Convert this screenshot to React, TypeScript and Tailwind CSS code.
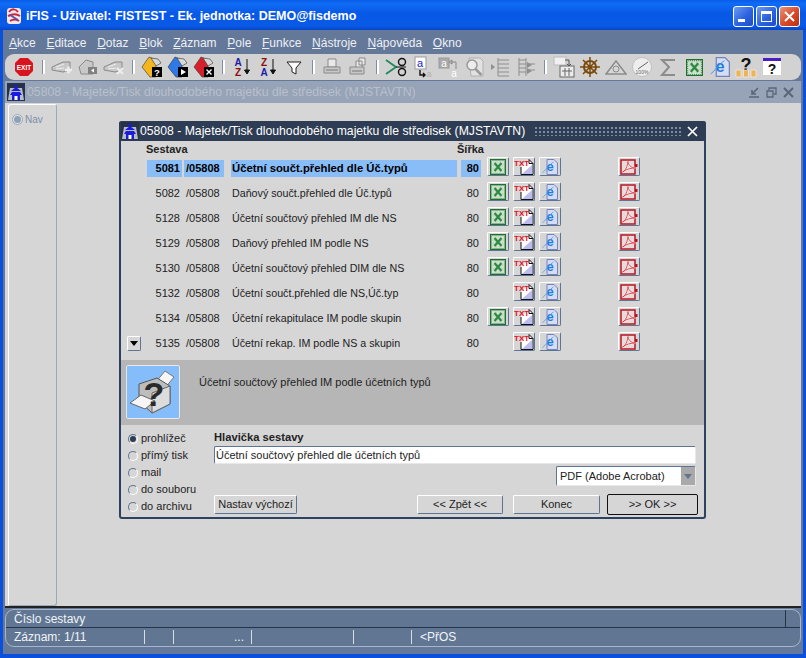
import type { ReactNode } from 'react'

const rows = [
  { id: '5081', name: 'Účetní součt.přehled dle Úč.typů', xls: true, active: true },
  { id: '5082', name: 'Daňový součt.přehled dle Úč.typů', xls: true },
  { id: '5128', name: 'Účetní součtový přehled IM dle NS', xls: true },
  { id: '5129', name: 'Daňový přehled IM podle NS', xls: true },
  { id: '5130', name: 'Účetní součtový přehled DIM dle NS', xls: true },
  { id: '5132', name: 'Účetní součt.přehled dle NS,Úč.typ', xls: false },
  { id: '5134', name: 'Účetní rekapitulace IM podle skupin', xls: true },
  { id: '5135', name: 'Účetní rekap. IM podle NS a skupin', xls: false },
]

const menu = ['Akce', 'Editace', 'Dotaz', 'Blok', 'Záznam', 'Pole', 'Funkce', 'Nástroje', 'Nápověda', 'Okno']
const radios = ['prohlížeč', 'přímý tisk', 'mail', 'do souboru', 'do archivu']

function Svg({ children, size = 22 }: { children: ReactNode; size?: number }) {
  return (
    <svg width={size} height={size} viewBox="0 0 22 22" className="block shrink-0">
      {children}
    </svg>
  )
}

function ExcelIcon({ size = 16 }: { size?: number }) {
  return (
    <svg width={size} height={size} viewBox="0 0 16 16" className="block">
      <rect x="0.5" y="0.5" width="15" height="15" fill="#cfe0cf" stroke="#1f6f30" />
      <rect x="1.5" y="1.5" width="13" height="13" fill="none" stroke="#3d8a4c" strokeDasharray="1 1" />
      <path d="M2.500 6h11M2.500 10h11M6 2.500v11M10 2.500v11" stroke="#9cc4a2" strokeWidth="0.6" />
      <path d="M4.500 4l7 8M11.500 4l-7 8" stroke="#2b8a40" strokeWidth="2" />
    </svg>
  )
}

function TxtIcon() {
  return (
    <svg width="20" height="16" viewBox="0 0 20 16" className="block">
      <path d="M15 0.500l4 4v11H7V8" fill="#fff" stroke="#111" />
      <path d="M8 15l10-9v9z" fill="#bcbcf0" />
      <path d="M15 0.500v4h4" fill="none" stroke="#111" />
      <text x="0" y="7" fontSize="8" fontWeight="700" fill="#e8101c" fontFamily="Liberation Sans, sans-serif">TXT</text>
    </svg>
  )
}

function IeIcon({ size = 16 }: { size?: number }) {
  return (
    <svg width={size} height={size} viewBox="0 0 16 16" className="block">
      <path d="M5 0.500h7l3.500 3.500v11.500H5z" fill="#d6dcf4" stroke="#7284bc" />
      <text x="8" y="12" textAnchor="middle" fontSize="13" fontWeight="700" fill="#1f7ede" fontFamily="Liberation Sans, sans-serif">e</text>
      <path d="M0.500 13.500c2-1 8-9 11-10.500" fill="none" stroke="#3a9cec" strokeWidth="0.8" />
    </svg>
  )
}

function PdfIcon() {
  return (
    <svg width="18" height="16" viewBox="0 0 18 16" className="block">
      <rect x="1" y="1" width="14" height="14" fill="#e6dcdc" stroke="#b81420" strokeWidth="1.500" />
      <rect x="15" y="5" width="2.500" height="3" fill="#b81420" />
      <path d="M2.500 13c3-1 5-6 5.500-10.500 0 3 3 6.500 7.500 6.500-4.500 0-9 1-13 4z" fill="none" stroke="#f0f0f0" strokeWidth="2" />
      <path d="M2.500 13c3-1 5-6 5.500-10.500 0 3 3 6.500 7.500 6.500-4.500 0-9 1-13 4z" fill="none" stroke="#e2202c" strokeWidth="0.8" />
    </svg>
  )
}

function Bevel({ children, className }: { children: ReactNode; className: string }) {
  return (
    <div className={`flex items-center justify-center rounded-[2px] border border-t-white border-l-white border-r-[#5d7593] border-b-[#5d7593] bg-[#d6d6d6] ${className}`}>
      {children}
    </div>
  )
}

function Sep() {
  return (
    <div className="flex w-[12px] justify-center">
      <div className="h-[14px] w-[3px] border-l border-[#7d8ea6] bg-white" />
    </div>
  )
}

const G = { fill: '#c8c8c8', stroke: '#8a8a8a' }

function Folder({ color, badge }: { color: string; badge: ReactNode }) {
  return (
    <Svg>
      <path d="M1 11L8 1l7 3v17H9z" fill={color} stroke="#333" strokeWidth="0.6" />
      <path d="M10 2l7 1 3 4-5 3z" fill="#d8d8d8" stroke="#333" strokeWidth="0.6" />
      <rect x="11" y="11" width="10" height="10" fill="#000" />
      {badge}
    </Svg>
  )
}

function Tool({ children }: { children: ReactNode }) {
  return <div className="flex w-[26px] justify-center">{children}</div>
}

function Toolbar() {
  return (
    <div className="flex h-[26px] items-center rounded-[9px] bg-[#d2d2d2] pl-[6px]">
      <Tool>
        <svg width="20" height="20" viewBox="0 0 20 20" className="block">
          <path d="M6 1h8l5 5v8l-5 5H6l-5-5V6z" fill="#d8141e" />
          <text x="10" y="13" textAnchor="middle" fontSize="6.500" fontWeight="700" fill="#fff" fontFamily="Liberation Sans, sans-serif">EXIT</text>
        </svg>
      </Tool>
      <Sep />
      <Tool><Svg><path d="M1 11l11-5 7 0v8l-7 2-11-2z" {...G} /><path d="M5 11l8-3M5 13l8-1" stroke="#eeeeee" /><path d="M14 14h7M17.500 10.500v7" stroke="#eeeeee" strokeWidth="2.400" /></Svg></Tool>
      <Tool><Svg><path d="M2 11l7-7 7 2v12H4z" {...G} /><rect x="11" y="11" width="9" height="7" fill="#808080" /><path d="M14 14.500l3-2v4z" fill="#fff" /></Svg></Tool>
      <Tool><Svg><path d="M1 11l11-5 7 0v8l-7 2-11-2z" {...G} /><path d="M5 11l8-3M5 13l8-1" stroke="#eeeeee" /><path d="M14 12l6 6M20 12l-6 6" stroke="#eeeeee" strokeWidth="2" /></Svg></Tool>
      <Sep />
      <Tool><Folder color="#f3b61f" badge={<text x="16" y="20" textAnchor="middle" fontSize="9.500" fontWeight="700" fill="#fff" fontFamily="Liberation Sans, sans-serif">?</text>} /></Tool>
      <Tool><Folder color="#2f78e8" badge={<path d="M14 13l5 3-5 3z" fill="#fff" />} /></Tool>
      <Tool><Folder color="#d8202c" badge={<path d="M13.500 13.500l5 5M18.500 13.500l-5 5" stroke="#fff" strokeWidth="1.400" />} /></Tool>
      <Sep />
      <Tool>
        <Svg>
          <text x="7" y="10" textAnchor="middle" fontSize="10" fontWeight="700" fill="#1c1ca8" fontFamily="Liberation Sans, sans-serif">A</text>
          <text x="7" y="20" textAnchor="middle" fontSize="10" fontWeight="700" fill="#8a1010" fontFamily="Liberation Sans, sans-serif">Z</text>
          <path d="M16 3v14M13.500 14l2.500 4 2.500-4z" stroke="#111" fill="#111" />
        </Svg>
      </Tool>
      <Tool>
        <Svg>
          <text x="7" y="10" textAnchor="middle" fontSize="10" fontWeight="700" fill="#8a1010" fontFamily="Liberation Sans, sans-serif">Z</text>
          <text x="7" y="20" textAnchor="middle" fontSize="10" fontWeight="700" fill="#1c1ca8" fontFamily="Liberation Sans, sans-serif">A</text>
          <path d="M16 3v14M13.500 14l2.500 4 2.500-4z" stroke="#111" fill="#111" />
        </Svg>
      </Tool>
      <Tool><Svg><path d="M4 6h14l-5 6v6l-4-2v-4z" fill="#fff" stroke="#222" /></Svg></Tool>
      <Sep />
      <Tool><Svg><path d="M7 3h8v8H7z" fill="#e8e8e8" stroke="#8a8a8a" /><path d="M3 11h16v6H3z" {...G} /><path d="M5 14h12" stroke="#777" /></Svg></Tool>
      <Tool><Svg><path d="M12 2h6v7h-6zM9 5h6v7H9z" fill="#e8e8e8" stroke="#8a8a8a" /><path d="M3 11h14v7H3z" {...G} /><path d="M5 15h10" stroke="#777" /></Svg></Tool>
      <Sep />
      <Tool><Svg><path d="M1 4l10 7-10 7" fill="none" stroke="#1c8a5c" strokeWidth="1.800" /><path d="M11 11h10" stroke="#111" /><circle cx="17" cy="6" r="3.500" fill="none" stroke="#111" strokeWidth="1.400" /><circle cx="17" cy="16" r="3.500" fill="none" stroke="#111" strokeWidth="1.400" /></Svg></Tool>
      <Tool>
        <Svg>
          <rect x="4" y="1" width="11" height="12" fill="#fff" stroke="#999" />
          <text x="9" y="11" textAnchor="middle" fontSize="11" fill="#1414e0" fontFamily="Liberation Sans, sans-serif">a</text>
          <path d="M9 14v5h5M12 17l2 2-2 2" fill="none" stroke="#111" strokeWidth="1.400" />
          <text x="18" y="21" textAnchor="middle" fontSize="9" fill="#b0b0b0" fontFamily="Liberation Sans, sans-serif">a</text>
        </Svg>
      </Tool>
      <Tool>
        <Svg>
          <rect x="2" y="2" width="10" height="10" fill="#aaa" stroke="#999" />
          <text x="7" y="10.500" textAnchor="middle" fontSize="10" fill="#fff" fontFamily="Liberation Sans, sans-serif">a</text>
          <path d="M14 6h5v7M12 6l3-2v4z" fill="none" stroke="#888" />
          <text x="17" y="21" textAnchor="middle" fontSize="10" fill="#fff" fontFamily="Liberation Sans, sans-serif">a</text>
        </Svg>
      </Tool>
      <Tool><Svg><path d="M6 2h11l3 3v15H8z" fill="#e2e2e2" stroke="#b0b0b0" /><circle cx="9" cy="9" r="5" fill="#ededed" stroke="#9a9a9a" strokeWidth="1.500" /><path d="M12.500 13l6 6" stroke="#9a9a9a" strokeWidth="2.500" /></Svg></Tool>
      <Tool><Svg><path d="M9 2v18M9 4h11M9 8h11M9 12h11M9 16h11M9 20h11" stroke="#8e8e8e" fill="none" /><path d="M2 8l4 3-4 3z" fill="#8e8e8e" /></Svg></Tool>
      <Tool><Svg><path d="M4 2v18M11 2v18M4 4h7M4 8h7M4 12h7M4 16h7M14 8h6M14 14h6" stroke="#8e8e8e" fill="none" /><path d="M12 6l5 3-5 3zM12 12l5 3-5 3z" fill="#8e8e8e" /></Svg></Tool>
      <Sep />
      <Tool><Svg><rect x="1" y="1" width="12" height="8" fill="#f0f0f0" stroke="#bbb" /><rect x="7" y="10" width="14" height="11" fill="#ececec" stroke="#666" /><path d="M9 15h10M12 12v8M16 12v8" stroke="#666" /><path d="M12 4h4v5M14 8l2 2 2-2" fill="none" stroke="#555" /></Svg></Tool>
      <Tool><Svg><circle cx="11" cy="11" r="6" fill="none" stroke="#7a4a0c" strokeWidth="2" /><path d="M1 11h20M4 4l14 14M18 4L4 18M11 1v20" stroke="#7a4a0c" strokeWidth="1.500" /></Svg></Tool>
      <Tool><Svg><path d="M11 5L1 18h20z" fill="#d6d6d6" stroke="#8c8c8c" strokeWidth="1.500" /><circle cx="11" cy="13" r="3" fill="none" stroke="#8c8c8c" /></Svg></Tool>
      <Tool><Svg><circle cx="11" cy="11" r="9.500" fill="#eeeeee" stroke="#c2c2c2" /><path d="M7 13l10-7" stroke="#666" /><text x="11" y="18" textAnchor="middle" fontSize="5" fill="#666" fontFamily="Liberation Sans, sans-serif">100%</text></Svg></Tool>
      <Tool><Svg><path d="M18 4H5l7 7-7 8h13" fill="none" stroke="#8c8c8c" strokeWidth="2" /></Svg></Tool>
      <Tool><ExcelIcon size={17} /></Tool>
      <Tool><IeIcon size={20} /></Tool>
      <Tool>
        <Svg>
          <text x="11" y="15" textAnchor="middle" fontSize="18" fontWeight="700" fill="#111" fontFamily="Liberation Sans, sans-serif">?</text>
          <path d="M1 14h5v7H1zM8.500 14h5v7h-5zM16 14h5v7h-5z" fill="#eeb45c" stroke="#fff" strokeWidth="0.500" />
        </Svg>
      </Tool>
      <Tool>
        <Svg>
          <rect x="2" y="2" width="18" height="17" fill="#fff" />
          <rect x="2" y="2" width="18" height="3" fill="#4a1cc4" />
          <text x="11" y="18" textAnchor="middle" fontSize="14" fontWeight="700" fill="#111" fontFamily="Liberation Sans, sans-serif">?</text>
        </Svg>
      </Tool>
    </div>
  )
}

function Pagoda({ size = 18 }: { size?: number }) {
  return (
    <svg width={size} height={size} viewBox="0 0 18 18" className="block shrink-0">
      <rect width="18" height="18" fill="#26324a" />
      <path d="M1 17l2-12h12l2 12z" fill="#b8bcc4" />
      <path d="M9 1l2 3h-4zM4 8l5-4 5 4zM3 12h12l-2-3H5zM5 12h8v5H5z" fill="#1a1ae0" />
      <rect x="7.500" y="13" width="3" height="4" fill="#fff" />
    </svg>
  )
}

function XpButton({ red, children }: { red?: boolean; children: ReactNode }) {
  return (
    <div className={`flex h-[21px] w-[21px] items-center justify-center rounded-[3px] border border-white ${red ? 'bg-[linear-gradient(135deg,#e89478,#d8492a_55%,#b9300f)]' : 'bg-[linear-gradient(135deg,#6d9cf2,#2c62e0_55%,#1e4cc8)]'}`}>
      {children}
    </div>
  )
}

function PlainButton({ label, className }: { label: string; className: string }) {
  return (
    <Bevel className={`text-[11px] leading-none text-[#222] ${className}`}>
      {label}
    </Bevel>
  )
}

function ReportDialog() {
  return (
    <div className="absolute left-[114px] top-[18px] h-[398px] w-[587px] rounded-[3px] border-2 border-t-0 border-[#2d4260] bg-[#d6d6d6] text-[11px] text-[#222]">
      <div className="mx-[-2px] flex h-[20px] items-center rounded-t-[3px] bg-[#2e3d54] pl-[2px] pr-[8px] text-[12.2px] text-white">
        <Pagoda />
        <span className="ml-[1px] whitespace-nowrap">05808 - Majetek/Tisk dlouhodobého majetku dle středisek (MJSTAVTN)</span>
        <div className="ml-[9px] h-[10px] flex-1 bg-[radial-gradient(#7f8ca0_1px,transparent_1.2px)] bg-[length:4px_4px]" />
        <svg width="11" height="11" viewBox="0 0 11 11" className="ml-[6px] block shrink-0">
          <path d="M1 1l9 9M10 1l-9 9" stroke="#fff" strokeWidth="1.700" />
        </svg>
      </div>

      <div className="flex h-[15px] items-end pl-[25px] text-[11px] font-bold leading-[13px]">
        <span className="w-[311px]">Sestava</span>
        <span>Šířka</span>
      </div>

      <div className="relative h-[200px]">
        {rows.map(r => {
          const cell = r.active ? 'bg-[#88bdf8] font-bold text-black' : ''
          return (
            <div key={r.id} className="flex h-[25px] items-center pl-[26px]">
              <div className={`h-[17px] w-[35px] pr-[2px] text-right leading-[17px] ${cell}`}>{r.id}</div>
              <div className={`ml-[2px] h-[17px] w-[40px] pl-[2px] leading-[17px] ${cell}`}>/05808</div>
              <div className={`ml-[7px] h-[17px] w-[226px] whitespace-nowrap pl-[1px] leading-[17px] ${r.active ? 'text-[11.3px]' : 'text-[10.7px]'} ${cell}`}>{r.name}</div>
              <div className={`ml-[4px] h-[17px] w-[20px] pr-[2px] text-right leading-[17px] ${cell}`}>80</div>
              <div className="ml-[6px] w-[22px] -translate-y-[2px]">
                {r.xls && <Bevel className="h-[19px] w-[22px]"><ExcelIcon /></Bevel>}
              </div>
              <Bevel className="ml-[4px] h-[19px] w-[22px] -translate-y-[2px]"><TxtIcon /></Bevel>
              <Bevel className="ml-[4px] h-[19px] w-[22px] -translate-y-[2px]"><IeIcon /></Bevel>
              <Bevel className="ml-[57px] h-[19px] w-[22px] -translate-y-[2px]"><PdfIcon /></Bevel>
            </div>
          )
        })}
        <Bevel className="absolute bottom-[5px] left-[6px] h-[15px] w-[14px] border-l-[#5d7593] border-t-[#5d7593]">
          <svg width="8" height="5" viewBox="0 0 8 5" className="block"><path d="M0 0h8L4 5z" fill="#000" /></svg>
        </Bevel>
      </div>

      <div className="mt-[4px] flex h-[65px] items-start bg-[#b6b6b6] pl-[5px] pt-[5px]">
        <div className="flex h-[54px] w-[54px] items-center justify-center rounded-[2px] border border-[#e8e8e8] bg-[#85bdfb]">
          <svg width="48" height="46" viewBox="0 0 48 46" className="block">
            <path d="M26 14L36 2l9 6-9 11z" fill="#f6f6f6" stroke="#777" />
            <path d="M10 15l18-6 13 8v18l-18 9-13-12z" fill="#bdbdbd" stroke="#555" />
            <path d="M23 44V24l18-7v18z" fill="#dcdcdc" stroke="#666" />
            <path d="M1 34l11-8 14 6-10 8z" fill="#f6f6f6" stroke="#666" />
            <text x="25" y="37" textAnchor="middle" fontSize="34" fontWeight="700" fill="#2a2a2a" fontFamily="Liberation Sans, sans-serif">?</text>
          </svg>
        </div>
        <p className="ml-[19px] mt-[9px]">Účetní součtový přehled IM podle účetních typů</p>
      </div>

      <div className="flex pl-[7px] pt-[5px]">
        <div className="flex w-[86px] flex-col">
          {radios.map((label, i) => (
            <div key={label} className="flex h-[17px] items-center gap-[3px]">
              <div className="flex h-[10px] w-[10px] items-center justify-center rounded-full border border-t-[#5d7593] border-l-[#5d7593] border-r-white border-b-white bg-[#d6d6d6]">
                {i === 0 && <div className="h-[6px] w-[6px] rounded-full bg-[#2e3d54]" />}
              </div>
              <span className="whitespace-nowrap">{label}</span>
            </div>
          ))}
        </div>

        <div className="flex w-[484px] flex-col">
          <div className="h-[14px] text-[11.2px] font-bold leading-[14px]">Hlavička sestavy</div>
          <div className="mt-[2px] h-[18px] w-[482px] rounded-[2px] border border-t-[#5d7593] border-l-[#5d7593] border-r-[#e8e8e8] border-b-[#e8e8e8] bg-white pl-[1px] leading-[16px]">
            Účetní součtový přehled dle účetních typů
          </div>
          <div className="mt-[2px] ml-[342px] flex h-[20px] w-[140px] items-center rounded-[2px] border border-t-[#5d7593] border-l-[#5d7593] border-r-[#e8e8e8] border-b-[#e8e8e8] bg-white pl-[3px]">
            <span className="flex-1">PDF (Adobe Acrobat)</span>
            <div className="flex h-[18px] w-[14px] items-center justify-center bg-[#a9a9a9]">
              <svg width="8" height="5" viewBox="0 0 8 5" className="block"><path d="M0 0h8L4 5z" fill="#5d7593" /></svg>
            </div>
          </div>
          <div className="mt-[8px] flex items-center">
            <PlainButton label="Nastav výchozí" className="h-[19px] w-[83px]" />
            <PlainButton label="<< Zpět <<" className="ml-[120px] h-[19px] w-[86px]" />
            <PlainButton label="Konec" className="ml-[10px] h-[19px] w-[87px]" />
            <div className="ml-[7px] flex h-[21px] w-[91px] items-center justify-center rounded-[2px] border border-[#111] bg-[#d6d6d6] leading-none">
              {'>> OK >>'}
            </div>
          </div>
        </div>
      </div>
    </div>
  )
}

export default function App() {
  return (
    <div className="flex h-[658px] w-[806px] flex-col overflow-hidden bg-[#0a50dc] font-['Liberation_Sans',sans-serif]">
      <div className="flex h-[30px] items-center bg-[linear-gradient(180deg,#0a5ce8,#0f6cf4_12%,#0858e6_45%,#0a5ae8_85%,#0746c8)] pl-[6px] pr-[6px] pt-[2px]">
        <svg width="16" height="18" viewBox="0 0 16 18" className="block shrink-0">
          <rect x="1" y="1" width="14" height="16" rx="3" fill="#f4e8ea" />
          <path d="M3 5c3-4 7-3 9 0M2 9c4-2 9-2 12 0M4 14c3-2 6-2 9 0" fill="none" stroke="#c8283c" strokeWidth="2" />
          <path d="M4 8l8 5" stroke="#5b50a8" strokeWidth="1.500" />
        </svg>
        <div className="ml-[4px] flex-1 whitespace-nowrap text-[12.5px] font-bold text-white">
          iFIS - Uživatel: FISTEST - Ek. jednotka: DEMO@fisdemo
        </div>
        <div className="flex gap-[2px]">
          <XpButton><div className="mt-[9px] mr-[5px] h-[3px] w-[7px] bg-white" /></XpButton>
          <XpButton><div className="h-[11px] w-[11px] border border-t-[3px] border-white" /></XpButton>
          <XpButton red>
            <svg width="11" height="11" viewBox="0 0 11 11" className="block"><path d="M1 1l9 9M10 1l-9 9" stroke="#fff" strokeWidth="2" /></svg>
          </XpButton>
        </div>
      </div>

      <div className="mx-[3px] flex flex-1 flex-col bg-[#64799a] px-[2px]">
        <div className="flex h-[24px] items-center gap-[10.7px] pl-[4px] pt-[1px] text-[12px] text-[#eef0f4]">
          {menu.map(m => (
            <span key={m}><span className="underline">{m[0]}</span>{m.slice(1)}</span>
          ))}
        </div>
        <Toolbar />

        <div className="mt-[1px] flex h-[22px] items-center bg-[#97a3b6] pl-[2px] pr-[7px]">
          <Pagoda />
          <span className="ml-[2px] flex-1 whitespace-nowrap text-[12.3px] text-[#b7c0cd]">05808 - Majetek/Tisk dlouhodobého majetku dle středisek (MJSTAVTN)</span>
          <div className="flex items-center gap-[6px]">
            <svg width="11" height="11" viewBox="0 0 11 11" className="block"><path d="M9 1L3 7M3 3v4h4M0 10h10" fill="none" stroke="#59667a" strokeWidth="1.600" /></svg>
            <svg width="11" height="11" viewBox="0 0 11 11" className="block"><path d="M3 3V1h7v6H8M1 4h6v6H1z" fill="none" stroke="#59667a" strokeWidth="1.300" /></svg>
            <svg width="11" height="11" viewBox="0 0 11 11" className="block"><path d="M1 1l9 9M10 1l-9 9" stroke="#59667a" strokeWidth="2" /></svg>
          </div>
        </div>

        <div className="relative flex h-[505px] border-b-2 border-[#222] bg-[#d6d6d6] pl-[3px] pt-[1px]">
          <div className="h-[502px] w-[49px] rounded-[3px] border border-t-white border-l-white border-r-[#9aa9bd] border-b-[#9aa9bd] pl-[3px] pt-[7px]">
            <div className="flex items-center gap-[2px] text-[10px] text-[#7d8fa8]">
              <div className="flex h-[11px] w-[11px] items-center justify-center rounded-full border border-[#9aa9bd] bg-[#e4e4e4]">
                <div className="h-[7px] w-[7px] rounded-full bg-[#8fa1ba]" />
              </div>
              Nav
            </div>
          </div>
          <ReportDialog />
        </div>

        <div className="mt-[1px] flex h-[38px] flex-col rounded-[9px] border border-[#a9b6c8] bg-[#607692] text-[12px] text-[#f2f4f8]">
          <div className="flex h-[18px] items-center border-b border-[#26344a] pl-[8px] pr-[14px]">
            <span className="flex-1">Číslo sestavy</span>
            <div className="h-[18px] border-l border-[#26344a]" />
          </div>
          <div className="flex h-[18px] items-center pl-[8px]">
            <span className="w-[130px]">Záznam: 1/11</span>
            <div className="h-[14px] border-l border-[#d8dde6]" />
            <div className="w-[28px]" />
            <div className="h-[14px] border-l border-[#d8dde6]" />
            <div className="w-[77px] pr-[7px] text-right">...</div>
            <div className="h-[14px] border-l border-[#d8dde6]" />
            <div className="w-[101px]" />
            <div className="h-[14px] border-l border-[#d8dde6]" />
            <div className="w-[57px]" />
            <div className="h-[14px] border-l border-[#d8dde6]" />
            <span className="ml-[8px]">{'<PřOS'}</span>
          </div>
        </div>
        <div className="flex-1" />
      </div>
      <div className="h-[4px] bg-[#0a50dc]" />
    </div>
  )
}
